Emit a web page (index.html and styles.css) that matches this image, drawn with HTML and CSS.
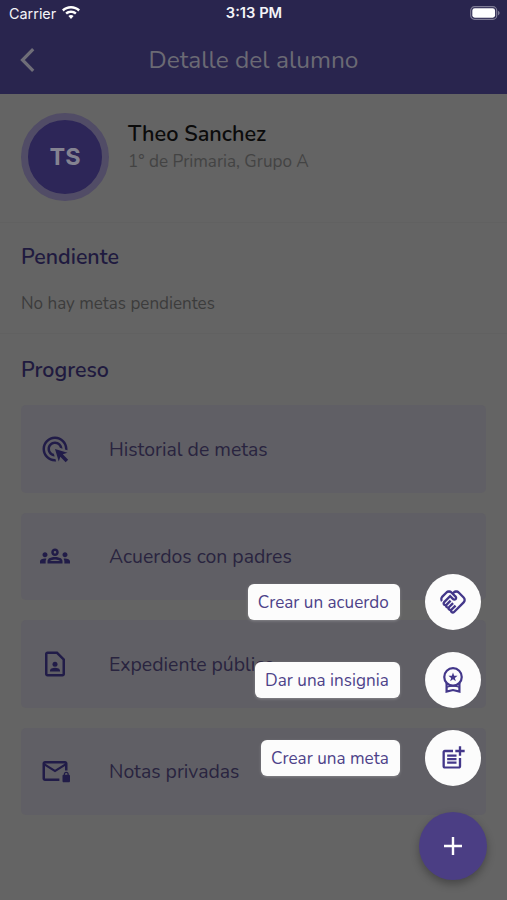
FILE: index.html
```
<!DOCTYPE html>
<html lang="es">
<head>
<meta charset="utf-8">
<title>Detalle del alumno</title>
<link rel="stylesheet" href="styles.css">
</head>
<body>
<div class="screen">
  <header class="header">
    <div class="status">
      <div class="carrier">Carrier
        <svg class="wifi" viewBox="0 0 18 14"><path d="M9 0C5.600 0 2.500 1.300 0 3.500l1.700 1.900C3.700 3.600 6.200 2.600 9 2.600s5.300 1 7.300 2.800L18 3.500C15.500 1.300 12.400 0 9 0zM9 4.500c-2.200 0-4.200.8-5.700 2.200l1.700 1.900c1.100-1 2.500-1.500 4-1.500s2.900.5 4 1.500l1.700-1.900C13.200 5.300 11.200 4.500 9 4.500zM9 9c-1 0-1.900.4-2.600 1L9 13l2.600-3C10.900 9.400 10 9 9 9z"/></svg>
      </div>
      <div class="clock">3:13 PM</div>
      <svg class="battery" viewBox="0 0 30 14"><rect x=".7" y=".7" width="26" height="12.600" rx="3.800" fill="none" stroke="#7f7c96" stroke-width="1.200"/><rect x="2.300" y="2.300" width="22.800" height="9.400" rx="2.400" fill="#fff"/><path d="M28 4.700c1 .4 1.600 1.300 1.600 2.300S29 8.900 28 9.300z" fill="#7f7c96"/></svg>
    </div>
    <div class="navbar">
      <svg class="back" viewBox="0 0 14 24"><path d="M12.700 1.200 2 12l10.700 10.800"/></svg>
      <h1>Detalle del alumno</h1>
    </div>
  </header>

  <section class="student">
    <div class="avatar">TS</div>
    <div class="identity">
      <h2>Theo Sanchez</h2>
      <p>1° de Primaria, Grupo A</p>
    </div>
  </section>

  <section class="pending">
    <h3>Pendiente</h3>
    <p>No hay metas pendientes</p>
  </section>

  <section class="progress">
    <h3>Progreso</h3>
    <div class="cards">
      <div class="card">
        <svg viewBox="0 0 24 24"><path d="M11.710 17.990C8.530 17.840 6 15.220 6 12c0-3.310 2.690-6 6-6 3.220 0 5.840 2.530 5.990 5.710l-2.100-.63C15.480 9.310 13.890 8 12 8c-2.210 0-4 1.790-4 4 0 1.890 1.310 3.480 3.080 3.890l.63 2.100zM22 12c0 .3-.01.6-.04.9l-1.970-.59C20 12.210 20 12.100 20 12c0-4.420-3.580-8-8-8s-8 3.580-8 8 3.580 8 8 8c.1 0 .21 0 .31-.01l.59 1.970c-.3.030-.6.040-.9.040C6.480 22 2 17.520 2 12S6.480 2 12 2s10 4.480 10 10zm-3.770 4.260L22 15l-10-3 3 10 1.260-3.770 4.270 4.270 1.980-1.980-4.280-4.260z"/></svg>
        <span>Historial de metas</span>
      </div>
      <div class="card">
        <svg viewBox="0 0 24 24"><path d="M4 13c1.100 0 2-.9 2-2s-.9-2-2-2-2 .9-2 2 .9 2 2 2zm1.130 1.100C4.760 14.040 4.390 14 4 14c-.99 0-1.930.21-2.780.58C.48 14.900 0 15.620 0 16.430V18h4.500v-1.610c0-.83.23-1.610.63-2.290zM20 13c1.100 0 2-.9 2-2s-.9-2-2-2-2 .9-2 2 .9 2 2 2zm4 3.430c0-.81-.48-1.530-1.220-1.850C21.930 14.210 20.990 14 20 14c-.39 0-.76.04-1.130.1.4.68.63 1.460.63 2.290V18H24v-1.570zm-7.760-2.780c-1.170-.52-2.610-.9-4.240-.9s-3.070.39-4.240.9C6.680 14.130 6 15.210 6 16.390V18h12v-1.610c0-1.180-.68-2.260-1.760-2.740zM8.070 16c.09-.23.13-.39.91-.69.97-.38 1.990-.56 3.020-.56s2.050.18 3.020.56c.77.3.81.46.91.69H8.070zM12 8c.55 0 1 .45 1 1s-.45 1-1 1-1-.45-1-1 .45-1 1-1m0-2c-1.660 0-3 1.340-3 3s1.340 3 3 3 3-1.340 3-3-1.340-3-3-3z"/></svg>
        <span>Acuerdos con padres</span>
      </div>
      <div class="card">
        <svg viewBox="0 0 24 24"><path d="M14 2H6c-1.100 0-2 .9-2 2v16c0 1.100.9 2 2 2h12c1.100 0 2-.9 2-2V8l-6-6zm4 18H6V4h7.170L18 8.830V20z"/><circle cx="12" cy="12.200" r="2"/><path d="M8 18v-.6c0-.8.5-1.500 1.200-1.800.9-.4 1.800-.6 2.800-.6s1.900.2 2.800.6c.7.3 1.200 1 1.200 1.800v.6z"/></svg>
        <span>Expediente público</span>
      </div>
      <div class="card">
        <svg viewBox="0 0 24 24"><path d="M4 4C2.900 4 2 4.900 2 6v12c0 1.100.9 2 2 2h11.500v-2H4V8l8 5 8-5v3.500h2V6c0-1.100-.9-2-2-2zm8 7L4 6h16z"/><path d="M23 15v-.5a2 2 0 0 0-4 0v.5c-.6 0-1 .4-1 1v4c0 .6.4 1 1 1h4c.6 0 1-.4 1-1v-4c0-.6-.4-1-1-1zm-1 0h-2v-.5a1 1 0 0 1 2 0z"/></svg>
        <span>Notas privadas</span>
      </div>
    </div>
  </section>

  <div class="actions">
    <div class="action">
      <span class="label">Crear un acuerdo</span>
      <span class="bubble"><svg viewBox="0 0 24 24"><path d="M12.220 19.850c-.18.18-.5.21-.71 0-.18-.18-.21-.5 0-.71l3.390-3.390-1.410-1.410-3.390 3.390c-.19.2-.51.19-.71 0-.21-.21-.18-.53 0-.71l3.390-3.390-1.410-1.410-3.390 3.390c-.18.18-.5.21-.71 0-.19-.19-.19-.51 0-.71l3.390-3.390-1.420-1.410-3.390 3.390c-.18.18-.5.21-.71 0-.19-.2-.19-.51 0-.71L9.520 8.400l1.870 1.860c.95.95 2.590.94 3.540 0 .98-.98.98-2.560 0-3.540l-1.860-1.860.28-.28c.78-.78 2.050-.78 2.830 0l4.240 4.240c.78.78.78 2.050 0 2.830l-8.200 8.200zm9.610-6.780c1.560-1.560 1.560-4.090 0-5.660l-4.240-4.240c-1.560-1.560-4.090-1.560-5.660 0l-.28.280-.28-.28c-1.560-1.560-4.090-1.560-5.660 0L2.170 6.710C.75 8.130.62 10.340 1.770 11.900l1.450-1.450c-.39-.75-.26-1.700.37-2.330l3.540-3.540c.78-.78 2.050-.78 2.830 0l3.560 3.560c.18.18.21.5 0 .71-.21.21-.53.18-.71 0L9.520 5.570l-5.800 5.790c-.98.97-.98 2.560 0 3.540.39.39.89.63 1.420.7.070.52.3 1.020.7 1.420.4.4.9.63 1.420.7.070.52.3 1.020.7 1.420.4.4.9.63 1.420.7.070.54.31 1.030.7 1.420.47.47 1.100.73 1.770.73s1.300-.26 1.770-.73l8.210-8.190z"/></svg></span>
    </div>
    <div class="action">
      <span class="label">Dar una insignia</span>
      <span class="bubble"><svg viewBox="0 0 24 24" class="line"><circle cx="12" cy="9.400" r="7.500"/><path d="M6.500 14.600v7.400L12 20.600l5.500 1.400v-7.400"/><path class="thin" d="M6.500 18.100c3.600-1.100 7.400-1.100 11 0"/><path class="solid" d="m12 5.600 1 2.700 2.900.1-2.300 1.800.8 2.800-2.400-1.600-2.400 1.600.8-2.800-2.300-1.800 2.900-.1z"/></svg></span>
    </div>
    <div class="action">
      <span class="label">Crear una meta</span>
      <span class="bubble"><svg viewBox="0 0 24 24"><path d="M17 19.220H5V7h7V5H5c-1.100 0-2 .9-2 2v12c0 1.100.9 2 2 2h12c1.100 0 2-.9 2-2v-7h-2v7.220z"/><path d="M19 2h-2v3h-3c.01.01 0 2 0 2h3v2.990c.01.01 2 0 2 0V7h3V5h-3V2zM7 9h8v2H7zM7 12v2h8v-2h-3zM7 15h8v2H7z"/></svg></span>
    </div>
    <div class="fab"><svg viewBox="0 0 20 20"><path d="M10 1v18M1 10h18"/></svg></div>
  </div>
</div>
</body>
</html>
```
FILE: styles.css
```
* { box-sizing: border-box; margin: 0; padding: 0; }

body {
  background: #646464;
  font-family: "Nunito", "Noto Sans", sans-serif;
}

.screen {
  position: relative;
  width: 507px;
  height: 900px;
  overflow: hidden;
  background: #646464;
}

.header { height: 94px; background: #29254e; }

.status {
  display: grid;
  grid-template-columns: 1fr auto 1fr;
  align-items: center;
  height: 27px;
  padding: 0 7px 0 9px;
  color: #f4f4f8;
  font: 14.4px/27px Inter, sans-serif;
}
.carrier { display: flex; align-items: center; gap: 6px; }
.wifi { width: 18px; height: 14px; fill: #fff; margin-top: -2px; }
.clock { margin-left: -1px; font-size: 14.7px; font-weight: 600; }
.battery { width: 30px; height: 14px; justify-self: end; margin-top: -1px; }

.navbar {
  display: grid;
  grid-template-columns: 40px 1fr 40px;
  align-items: center;
  height: 66px;
  padding: 0 20px;
}
.back { width: 15px; height: 24px; fill: none; stroke: #6f6e78; stroke-width: 3.2; }
.navbar h1 {
  color: #6b6a74;
  font-size: 24.5px;
  font-weight: 400;
  line-height: 33px;
  text-align: center;
  white-space: nowrap;
}

.student {
  display: flex;
  gap: 19px;
  height: 128px;
  padding: 19px 21px;
}
.avatar {
  width: 88px;
  height: 88px;
  border: 7.5px solid #514c66;
  border-radius: 50%;
  background: #2d2658;
  color: #848391;
  font: 700 23.500px/74px Inter, sans-serif;
  text-align: center;
}
.identity { padding-top: 6px; }
.identity h2 { color: #0b0b0b; font-size: 21.7px; font-weight: 600; line-height: 31px; }
.identity p { margin-top: 1px; color: #434343; font-size: 17.1px; line-height: 22px; }

.pending {
  height: 112px;
  padding: 19px 21px 0;
  border-top: 1px solid #616161;
  border-bottom: 1px solid #616161;
}
h3 { color: #1f1a3f; font-size: 21.4px; font-weight: 600; line-height: 30px; }
.pending p { margin-top: 20px; color: #3c3c3c; font-size: 17.05px; line-height: 24px; }

.progress { padding: 21px 21px 0; }
.cards { display: grid; gap: 20px; margin-top: 20px; }
.card {
  display: flex;
  align-items: center;
  gap: 39px;
  height: 87.5px;
  padding-left: 19px;
  border-radius: 5px;
  background: #605f65;
  color: #29243f;
  font-size: 19.45px;
}
.card span { padding-top: 1px; }
.card svg { width: 30px; height: 30px; fill: #211c48; }

.actions {
  position: absolute;
  right: 20px;
  bottom: 20px;
  display: flex;
  flex-direction: column;
  align-items: flex-end;
  gap: 22px;
}
.action { display: flex; align-items: center; gap: 25.5px; padding-right: 6px; }
.label {
  height: 36px;
  padding: 1px 10.8px 0 10px;
  border-radius: 6px;
  background: #fcfcfc;
  box-shadow: 0 1px 3px rgba(255, 255, 255, .25);
  color: #4d4289;
  font-size: 17.1px;
  line-height: 36px;
  white-space: nowrap;
}
.bubble {
  display: grid;
  place-items: center;
  width: 56px;
  height: 56px;
  border-radius: 50%;
  background: #fcfcfc;
}
.bubble svg { width: 28px; height: 28px; fill: #43378a; }
.bubble .line { fill: none; stroke: #43378a; stroke-width: 1.9; }
.bubble .line .thin { stroke-width: 1.2; }
.bubble .line .solid { fill: #43378a; stroke: none; }

.fab {
  display: grid;
  place-items: center;
  width: 68px;
  height: 68px;
  margin-top: 4px;
  border-radius: 50%;
  background: #4b3e84;
  box-shadow: 0 4px 8px rgba(0, 0, 0, .3);
}
.fab svg { width: 20px; height: 20px; fill: none; stroke: #fff; stroke-width: 2.4; }
```
